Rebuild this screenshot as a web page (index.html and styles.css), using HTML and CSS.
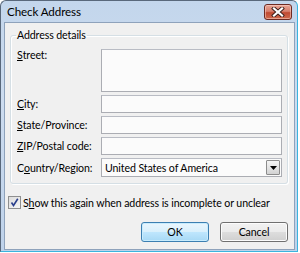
FILE: index.html
```html
<!DOCTYPE html>
<html>
<head>
<meta charset="utf-8">
<link rel="stylesheet" href="styles.css">
</head>
<body>
<div class="window">
  <div class="titlebar">
    <span class="title">Check Address</span>
    <button class="close" aria-label="Close">
      <svg width="14" height="10" viewBox="0 0 14 10">
        <path d="M3 1.5 L11 8.5 M11 1.5 L3 8.5" stroke="#3b1e1a" stroke-width="4" stroke-linecap="square"/>
        <path d="M3 1.5 L11 8.5 M11 1.5 L3 8.5" stroke="#ffffff" stroke-width="2.2" stroke-linecap="square"/>
      </svg>
    </button>
  </div>
  <div class="client">
    <fieldset class="group">
      <legend class="group-title">Address details</legend>
      <div class="form">
        <label class="lbl lbl-top"><u>S</u>treet:</label>
        <div class="field field-tall"></div>
        <label class="lbl"><u>C</u>ity:</label>
        <div class="field"></div>
        <label class="lbl"><u>S</u>tate/Province:</label>
        <div class="field"></div>
        <label class="lbl"><u>Z</u>IP/Postal code:</label>
        <div class="field"></div>
        <label class="lbl">C<u>o</u>untry/Region:</label>
        <div class="field select">
          <span class="select-text">United States of America</span>
          <span class="drop">
            <svg width="7" height="4" viewBox="0 0 7 4"><path d="M0 0 H7 L3.5 4 Z" fill="#000"/></svg>
          </span>
        </div>
      </div>
    </fieldset>
    <div class="check-row">
      <span class="checkbox">
        <svg width="11" height="11" viewBox="0 0 11 11"><path d="M2.5 5.5 L4.5 8.5 L8.8 1.8" fill="none" stroke="#2a3f8c" stroke-width="1.6"/></svg>
      </span>
      <span class="check-label">S<u>h</u>ow this again when address is incomplete or unclear</span>
    </div>
    <div class="buttons">
      <button class="btn btn-default">OK</button>
      <button class="btn">Cancel</button>
    </div>
  </div>
</div>
</body>
</html>
```

FILE: styles.css
```css
html, body {
  margin: 0;
  padding: 0;
  width: 300px;
  height: 253px;
  overflow: hidden;
  background: #ffffff;
}

body {
  font-family: "Lato", "Liberation Sans", sans-serif;
  font-size: 10.6px;
  letter-spacing: -0.1px;
  color: #000;
}

.window {
  box-sizing: border-box;
  width: 298px;
  height: 252px;
  border: 1px solid #59687b;
  border-right-color: #3bb4de;
  border-bottom-color: #3bb4de;
  border-radius: 6px 6px 0 0;
  background: linear-gradient(180deg, #c3d6ec 0%, #cddcef 40%, #bed2ea 100%);
  padding: 0 2px 1px 3px;
  display: flex;
  flex-direction: column;
}

.titlebar {
  height: 21px;
  display: flex;
  align-items: flex-start;
  justify-content: space-between;
  flex: none;
}

.title {
  font-size: 11.6px;
  padding: 3px 0 0 3px;
  line-height: 16px;
  color: #000;
}

.close {
  margin: 3px 3px 0 0;
  width: 28px;
  height: 16px;
  padding: 0;
  border: 1px solid #6d2a22;
  border-radius: 3px;
  background: linear-gradient(180deg, #e8a494 0%, #d7806e 45%, #c04a32 55%, #cf6b4f 100%);
  display: flex;
  align-items: center;
  justify-content: center;
  box-shadow: inset 0 0 0 1px rgba(255, 220, 210, 0.5);
}

.client {
  flex: 1;
  border: 1px solid #8ea2bb;
  background: #f0f0f0;
  display: flex;
  flex-direction: column;
}

.group {
  margin: 5px 6px 0 5px;
  padding: 0 6px 6px 6px;
  border: 1px solid #d5dfe5;
  border-radius: 3px;
  box-shadow: 1px 1px 0 #ffffff, inset 1px 1px 0 #ffffff;
  min-width: 0;
}

.group-title {
  padding: 0 1px;
  margin-left: -1px;
  line-height: 14px;
}

.form {
  display: grid;
  grid-template-columns: 84px 181px;
  row-gap: 3px;
  margin-top: 7px;
}

.lbl {
  display: flex;
  align-items: center;
  white-space: nowrap;
}

.lbl-top {
  align-items: flex-start;
  padding-top: 0;
}

.lbl u, .check-label u {
  text-decoration-thickness: 1px;
  text-underline-offset: 1px;
}

.field {
  box-sizing: border-box;
  height: 18px;
  border: 1px solid #abadb3;
  border-top-color: #b9bcc4;
  background: #fbfbfb;
}

.field-tall {
  height: 43px;
}

.select {
  height: 19px;
  display: flex;
  align-items: center;
  justify-content: space-between;
  padding: 0 1px 0 3px;
}

.select-text {
  white-space: nowrap;
}

.drop {
  box-sizing: border-box;
  width: 14px;
  height: 15px;
  border: 1px solid #8c8c8c;
  border-radius: 1px;
  background: linear-gradient(180deg, #f4f4f4 0%, #e4e4e4 50%, #d2d2d2 100%);
  display: flex;
  align-items: center;
  justify-content: center;
}

.check-row {
  display: flex;
  align-items: center;
  margin: 12px 0 0 3px;
  gap: 2px;
}

.checkbox {
  box-sizing: border-box;
  width: 13px;
  height: 13px;
  border: 1px solid #8e8f8f;
  background: linear-gradient(135deg, #dcdcdc 0%, #f6f6f6 100%);
  display: flex;
  align-items: center;
  justify-content: center;
}

.check-label {
  white-space: nowrap;
}

.buttons {
  display: flex;
  justify-content: flex-end;
  gap: 11px;
  margin: 13px 6px 0 0;
}

.btn {
  box-sizing: border-box;
  width: 68px;
  height: 20px;
  border: 1px solid #707070;
  border-radius: 3px;
  background: linear-gradient(180deg, #f2f2f2 0%, #ebebeb 48%, #dddddd 52%, #cfcfcf 100%);
  font-family: inherit;
  font-size: 10.6px;
  letter-spacing: inherit;
  color: #000;
  padding: 0;
  box-shadow: inset 0 0 0 1px #fcfcfc;
}

.btn-default {
  border-color: #3c7fb1;
  background: linear-gradient(180deg, #eaf6fd 0%, #d9f0fc 48%, #bee6fd 52%, #a7d9f5 100%);
  box-shadow: inset 0 0 0 1px #c8ecfd;
}
```
